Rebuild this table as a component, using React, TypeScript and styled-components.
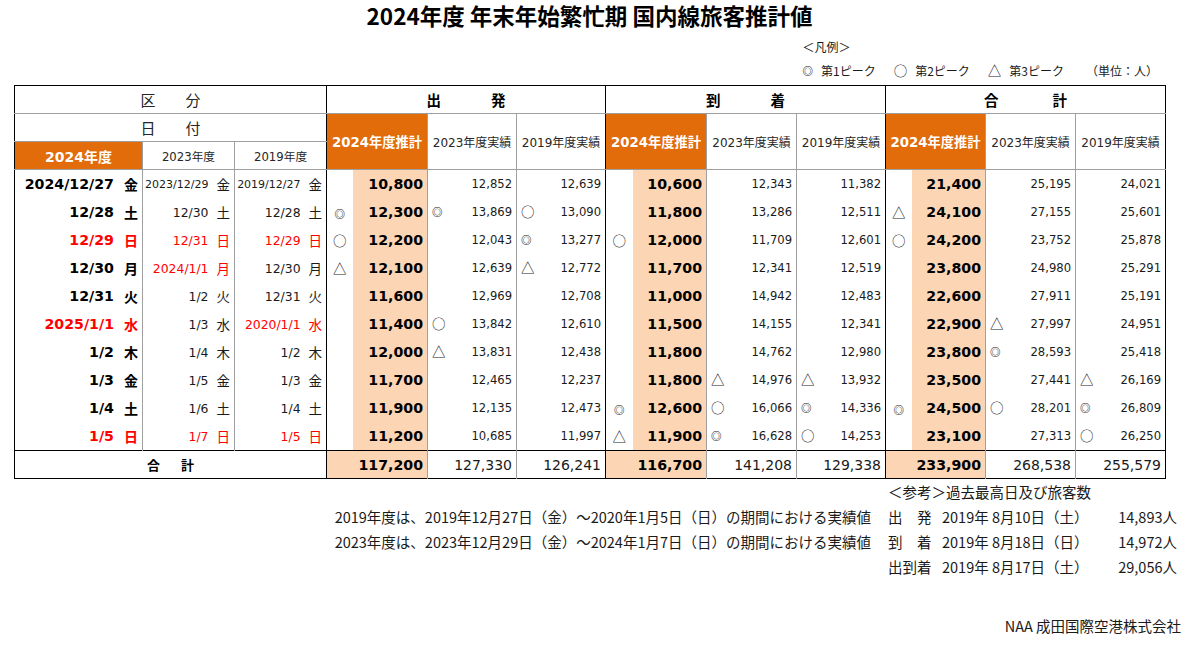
import React from "react";
import styled, { createGlobalStyle } from "styled-components";

const ORANGE = "#E26B0A";
const PEACH = "#FCD5B4";
const LIGHT = "#a0a0a0";
const RED = "#ff0000";
const JP = `"Noto Sans CJK JP", sans-serif`;
const NUM = `"DejaVu Sans", "Noto Sans CJK JP", sans-serif`;

const GlobalStyle = createGlobalStyle`
  html, body { margin: 0; padding: 0; background: #fff; }
  body { font-family: ${JP}; color: #1a1a1a; }
`;

const Page = styled.div`
  width: 1170px;
  padding-left: 14px;
  display: flex;
  flex-direction: column;
`;

const Title = styled.h1`
  margin: 0;
  width: 1151px;
  text-align: center;
  font-family: ${JP};
  font-size: 22.5px;
  font-weight: 700;
  line-height: 30px;
  color: #000;
`;

const LegendWrap = styled.div`
  width: 1151px;
  margin-top: 5px;
  display: flex;
  justify-content: flex-end;
  padding-right: 7px;
  box-sizing: border-box;
`;

const LegendBox = styled.div`
  display: flex;
  flex-direction: column;
  font-family: ${JP};
  font-size: 12px;
  line-height: 24px;
  color: #1a1a1a;
`;

const LegendRow = styled.div`
  display: flex;
  align-items: center;
  gap: 18px;
`;

const LegendItem = styled.span`
  display: inline-flex;
  align-items: center;
  gap: 8px;
`;

const Unit = styled.span`
  margin-left: 4px;
`;

const Mark = styled.span<{ $k: string }>`
  display: inline-block;
  font-family: ${JP};
  font-size: ${(p) => (p.$k === "◎" ? "10.5px" : "13.5px")};
  font-weight: ${(p) => (p.$k === "◎" ? 700 : 400)};
  line-height: 1;
  color: #1a1a1a;
`;

type Line = "dark" | "light";
const line = (l?: Line) =>
  l === "dark" ? "1px solid #000" : l === "light" ? `1px solid ${LIGHT}` : "none";

const Table = styled.table`
  margin-top: 2px;
  border-collapse: collapse;
  table-layout: fixed;
  width: 1151px;
  border: 1px solid #000;
  font-family: ${NUM};
  color: #1a1a1a;
`;

const Col = styled.col<{ $w: number }>`
  width: ${(p) => p.$w}px;
`;

const DataRow = styled.tr`
  & > td {
    height: 28px;
  }
`;

const Cell = styled.td<{ $l?: Line; $t?: Line; $b?: Line }>`
  height: 27px;
  padding: 0;
  vertical-align: middle;
  border-left: ${(p) => line(p.$l)};
  border-top: ${(p) => line(p.$t)};
  border-bottom: ${(p) => line(p.$b)};
  white-space: nowrap;
  overflow: hidden;
`;

const HeadLabel = styled(Cell)`
  text-align: center;
  font-family: ${JP};
  font-size: 15px;
  color: #262626;
`;

const GroupHead = styled(Cell)`
  text-align: center;
`;

const GroupTitle = styled.span<{ $gap: number }>`
  display: inline-flex;
  gap: ${(p) => p.$gap}px;
  font-family: ${JP};
  font-size: 14.5px;
  font-weight: 700;
  color: #000;
`;

const OrangeHead = styled(Cell)<{ $size: number }>`
  background: ${ORANGE};
  color: #fff;
  font-weight: 700;
  font-size: ${(p) => p.$size}px;
  text-align: center;
`;

const SubHead = styled(Cell)<{ $size: number }>`
  text-align: center;
  font-size: ${(p) => p.$size}px;
  color: #262626;
`;

const DateInner = styled.div<{ $main?: boolean; $red?: boolean; $long?: boolean }>`
  display: flex;
  justify-content: flex-end;
  align-items: center;
  gap: ${(p) => (p.$main ? 10 : 8)}px;
  padding-right: 4px;
  color: ${(p) => (p.$red ? RED : p.$main ? "#000" : "#1a1a1a")};
  font-weight: ${(p) => (p.$main ? 700 : 400)};
  font-size: ${(p) => (p.$main ? 14.2 : p.$long ? 11 : 12.4)}px;
`;

const Weekday = styled.span<{ $main?: boolean }>`
  font-family: ${JP};
  font-size: ${(p) => (p.$main ? 14 : 13.5)}px;
  width: 1em;
  text-align: center;
`;

const MarkCell = styled(Cell)`
  text-align: center;
`;

const ValueCell = styled(Cell)`
  background: ${PEACH};
  text-align: right;
  padding-right: 4px;
  font-weight: 700;
  font-size: 14.2px;
  color: #000;
`;

const NumInner = styled.div`
  display: flex;
  justify-content: space-between;
  align-items: center;
  padding: 0 4px 0 4px;
  font-size: 11.6px;
`;

const TotalLabel = styled(Cell)`
  text-align: center;
`;

const TotalTitle = styled.span`
  display: inline-flex;
  gap: 21px;
  font-family: ${JP};
  font-size: 13px;
  font-weight: 700;
  color: #000;
`;

const TotalValue = styled(Cell)`
  background: ${PEACH};
  text-align: right;
  padding-right: 4px;
  font-weight: 700;
  font-size: 14.2px;
  color: #000;
`;

const TotalNum = styled(Cell)`
  text-align: right;
  padding-right: 4px;
  font-size: 14px;
`;

const Footer = styled.div`
  margin-top: 0;
  display: grid;
  grid-template-columns: 857px 289px;
  column-gap: 17px;
  font-family: ${JP};
  font-size: 14.5px;
  line-height: 25px;
  color: #1a1a1a;
`;

const Notes = styled.div`
  padding-top: 25px;
  text-align: right;
`;

const RefBlock = styled.div`
  display: flex;
  flex-direction: column;
`;

const RefRow = styled.div`
  display: grid;
  grid-template-columns: 44px 1fr auto;
  column-gap: 10px;
`;

const RefCount = styled.span`
  text-align: right;
`;

const Company = styled.div`
  margin-top: 34px;
  padding-right: 3px;
  text-align: right;
  font-family: ${JP};
  font-size: 14.5px;
  line-height: 25px;
  color: #1a1a1a;
`;

const WIDTHS = [128, 92, 92, 26, 75, 89, 89, 27, 74, 90, 89, 26, 74, 90, 90];

type DateSpec = { d: string; w: string; red?: boolean; long?: boolean };
type Row = { a: DateSpec; b: DateSpec; c: DateSpec; v: string };

const ROWS: Row[] = [
  { a: { d: "2024/12/27", w: "金" }, b: { d: "2023/12/29", w: "金", long: true }, c: { d: "2019/12/27", w: "金", long: true }, v: "10,800 12,852 12,639 10,600 12,343 11,382 21,400 25,195 24,021" },
  { a: { d: "12/28", w: "土" }, b: { d: "12/30", w: "土" }, c: { d: "12/28", w: "土" }, v: "◎12,300 ◎13,869 ○13,090 11,800 13,286 12,511 △24,100 27,155 25,601" },
  { a: { d: "12/29", w: "日", red: true }, b: { d: "12/31", w: "日", red: true }, c: { d: "12/29", w: "日", red: true }, v: "○12,200 12,043 ◎13,277 ○12,000 11,709 12,601 ○24,200 23,752 25,878" },
  { a: { d: "12/30", w: "月" }, b: { d: "2024/1/1", w: "月", red: true }, c: { d: "12/30", w: "月" }, v: "△12,100 12,639 △12,772 11,700 12,341 12,519 23,800 24,980 25,291" },
  { a: { d: "12/31", w: "火" }, b: { d: "1/2", w: "火" }, c: { d: "12/31", w: "火" }, v: "11,600 12,969 12,708 11,000 14,942 12,483 22,600 27,911 25,191" },
  { a: { d: "2025/1/1", w: "水", red: true }, b: { d: "1/3", w: "水" }, c: { d: "2020/1/1", w: "水", red: true }, v: "11,400 ○13,842 12,610 11,500 14,155 12,341 22,900 △27,997 24,951" },
  { a: { d: "1/2", w: "木" }, b: { d: "1/4", w: "木" }, c: { d: "1/2", w: "木" }, v: "12,000 △13,831 12,438 11,800 14,762 12,980 23,800 ◎28,593 25,418" },
  { a: { d: "1/3", w: "金" }, b: { d: "1/5", w: "金" }, c: { d: "1/3", w: "金" }, v: "11,700 12,465 12,237 11,800 △14,976 △13,932 23,500 27,441 △26,169" },
  { a: { d: "1/4", w: "土" }, b: { d: "1/6", w: "土" }, c: { d: "1/4", w: "土" }, v: "11,900 12,135 12,473 ◎12,600 ○16,066 ◎14,336 ◎24,500 ○28,201 ◎26,809" },
  { a: { d: "1/5", w: "日", red: true }, b: { d: "1/7", w: "日", red: true }, c: { d: "1/5", w: "日", red: true }, v: "11,200 10,685 11,997 △11,900 ◎16,628 ○14,253 23,100 27,313 ○26,250" },
];

const TOTALS = [
  ["117,200", "127,330", "126,241"],
  ["116,700", "141,208", "129,338"],
  ["233,900", "268,538", "255,579"],
];

const GROUPS: { a: string; b: string; gap: number }[] = [
  { a: "出", b: "発", gap: 50 },
  { a: "到", b: "着", gap: 50 },
  { a: "合", b: "計", gap: 54 },
];

const split = (t: string) =>
  "◎○△".includes(t[0]) ? { m: t[0], n: t.slice(1) } : { m: "", n: t };

function DateCell({ s, main, l }: { s: DateSpec; main?: boolean; l?: Line }) {
  return (
    <Cell $l={l}>
      <DateInner $main={main} $red={s.red} $long={s.long}>
        <span>{s.d}</span>
        <Weekday $main={main}>{s.w}</Weekday>
      </DateInner>
    </Cell>
  );
}

function NumCell({ t }: { t: string }) {
  const { m, n } = split(t);
  return (
    <Cell $l="light">
      <NumInner>
        <span>{m && <Mark $k={m}>{m}</Mark>}</span>
        <span>{n}</span>
      </NumInner>
    </Cell>
  );
}

export default function App() {
  return (
    <>
      <GlobalStyle />
      <Page>
        <Title>2024年度 年末年始繁忙期 国内線旅客推計値</Title>
        <LegendWrap>
          <LegendBox>
            <span>＜凡例＞</span>
            <LegendRow>
              <LegendItem>
                <Mark $k="◎">◎</Mark>第1ピーク
              </LegendItem>
              <LegendItem>
                <Mark $k="○">○</Mark>第2ピーク
              </LegendItem>
              <LegendItem>
                <Mark $k="△">△</Mark>第3ピーク
              </LegendItem>
              <Unit>（単位：人）</Unit>
            </LegendRow>
          </LegendBox>
        </LegendWrap>

        <Table>
          <colgroup>
            {WIDTHS.map((w, i) => (
              <Col key={i} $w={w} />
            ))}
          </colgroup>
          <tbody>
            <tr>
              <HeadLabel colSpan={3} $b="light">区　　分</HeadLabel>
              {GROUPS.map((g) => (
                <GroupHead key={g.a} colSpan={4} $l="dark" $b="light">
                  <GroupTitle $gap={g.gap}>
                    <span>{g.a}</span>
                    <span>{g.b}</span>
                  </GroupTitle>
                </GroupHead>
              ))}
            </tr>
            <tr>
              <HeadLabel colSpan={3} $b="light">日　　付</HeadLabel>
              {GROUPS.map((g) => (
                <React.Fragment key={g.a}>
                  <OrangeHead colSpan={2} rowSpan={2} $l="dark" $b="light" $size={13.3}>
                    2024年度推計
                  </OrangeHead>
                  <SubHead rowSpan={2} $l="light" $b="light" $size={12}>
                    2023年度実績
                  </SubHead>
                  <SubHead rowSpan={2} $l="light" $b="light" $size={12}>
                    2019年度実績
                  </SubHead>
                </React.Fragment>
              ))}
            </tr>
            <tr>
              <OrangeHead $b="light" $size={14}>2024年度</OrangeHead>
              <SubHead $l="light" $b="light" $size={11.7}>2023年度</SubHead>
              <SubHead $l="light" $b="light" $size={11.7}>2019年度</SubHead>
            </tr>
            {ROWS.map((r, ri) => {
              const vals = r.v.split(" ");
              return (
                <DataRow key={ri}>
                  <DateCell s={r.a} main />
                  <DateCell s={r.b} l="light" />
                  <DateCell s={r.c} l="light" />
                  {[0, 1, 2].map((g) => {
                    const main = split(vals[g * 3]);
                    return (
                      <React.Fragment key={g}>
                        <MarkCell $l="dark">{main.m && <Mark $k={main.m}>{main.m}</Mark>}</MarkCell>
                        <ValueCell>{main.n}</ValueCell>
                        <NumCell t={vals[g * 3 + 1]} />
                        <NumCell t={vals[g * 3 + 2]} />
                      </React.Fragment>
                    );
                  })}
                </DataRow>
              );
            })}
            <tr>
              <TotalLabel colSpan={3} $t="dark">
                <TotalTitle>
                  <span>合</span>
                  <span>計</span>
                </TotalTitle>
              </TotalLabel>
              {TOTALS.map((t, i) => (
                <React.Fragment key={i}>
                  <TotalValue colSpan={2} $l="dark" $t="dark">{t[0]}</TotalValue>
                  <TotalNum $l="light" $t="dark">{t[1]}</TotalNum>
                  <TotalNum $l="light" $t="dark">{t[2]}</TotalNum>
                </React.Fragment>
              ))}
            </tr>
          </tbody>
        </Table>

        <Footer>
          <Notes>
            <div>2019年度は、2019年12月27日（金）～2020年1月5日（日）の期間における実績値</div>
            <div>2023年度は、2023年12月29日（金）～2024年1月7日（日）の期間における実績値</div>
          </Notes>
          <RefBlock>
            <div>＜参考＞過去最高日及び旅客数</div>
            <RefRow>
              <span>出　発</span>
              <span>2019年 8月10日（土）</span>
              <RefCount>14,893人</RefCount>
            </RefRow>
            <RefRow>
              <span>到　着</span>
              <span>2019年 8月18日（日）</span>
              <RefCount>14,972人</RefCount>
            </RefRow>
            <RefRow>
              <span>出到着</span>
              <span>2019年 8月17日（土）</span>
              <RefCount>29,056人</RefCount>
            </RefRow>
          </RefBlock>
        </Footer>
        <Company>NAA 成田国際空港株式会社</Company>
      </Page>
    </>
  );
}
